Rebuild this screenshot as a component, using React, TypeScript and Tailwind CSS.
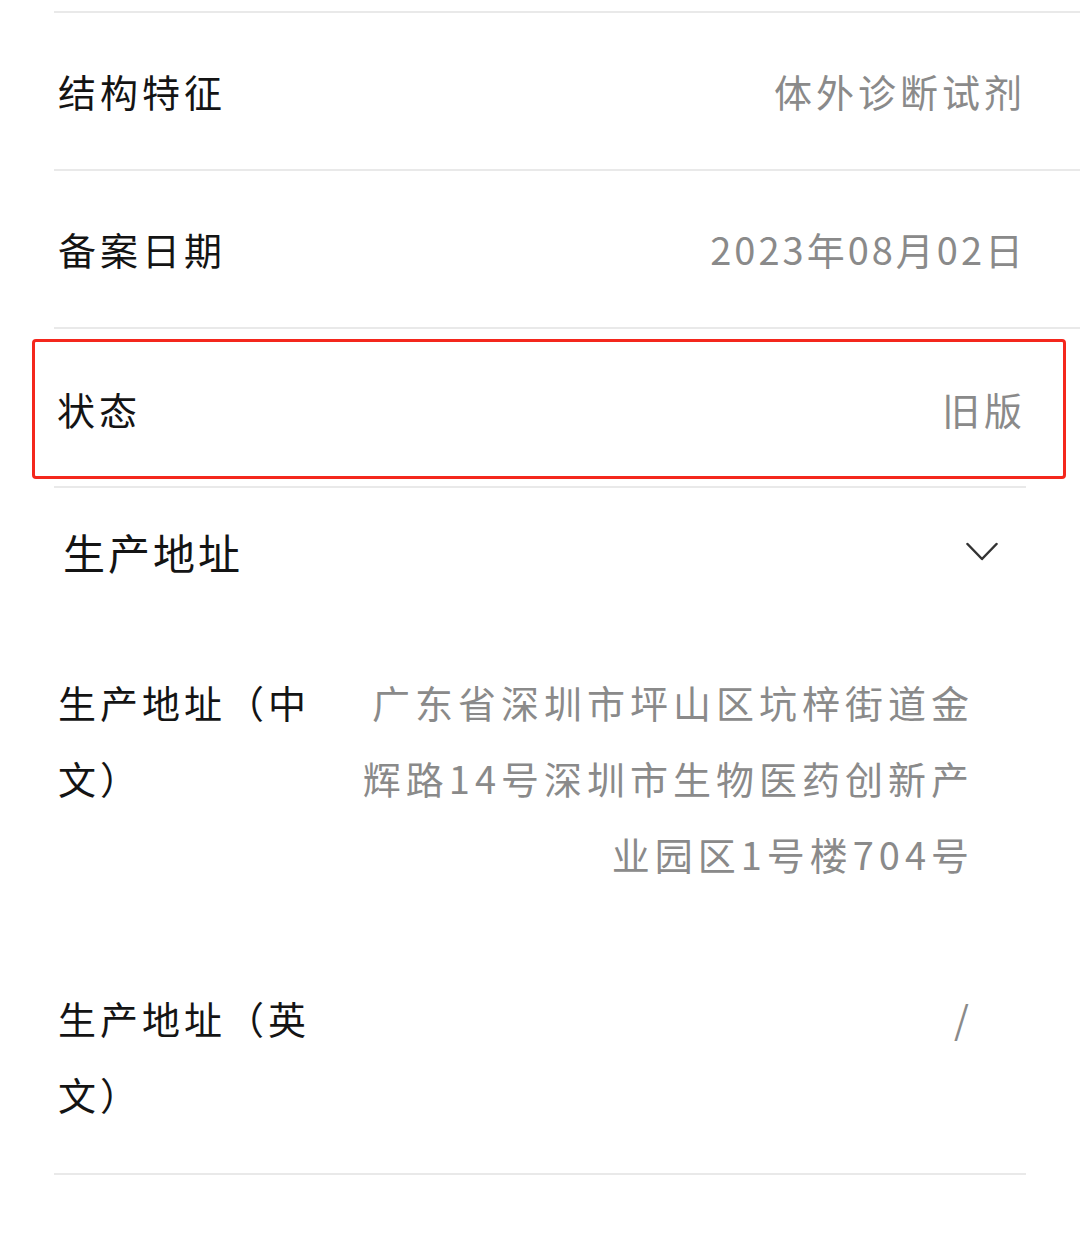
import type { ReactNode } from 'react';

const font = { fontFamily: '"Noto Sans CJK SC", "Noto Sans", sans-serif' };

const labelClass = 'text-[38px] leading-[76px] tracking-[4px] text-[#141414]';
const valueClass = 'text-[38px] leading-[76px] tracking-[4px] text-[#8a8a8a]';

function Divider({ full }: { full?: boolean }) {
  return (
    <div
      className={
        full
          ? 'ml-[54px] h-[2px] bg-[#e9e9e9]'
          : 'ml-[54px] h-[2px] w-[972px] bg-[#e9e9e9]'
      }
    />
  );
}

function InfoRow({ label, children }: { label: string; children: ReactNode }) {
  return (
    <div className="flex h-[156px] items-center justify-between pr-[54px] pl-[58px]">
      <span className={labelClass}>{label}</span>
      {children}
    </div>
  );
}

function AddressRow({
  label,
  lines,
  className,
}: {
  label: string;
  lines: string[];
  className?: string;
}) {
  return (
    <div className={`flex pl-[58px] ${className ?? ''}`}>
      <div className={`w-[270px] shrink-0 ${labelClass}`}>{label}</div>
      <div className="ml-[26px] w-[620px] text-right text-[38px] leading-[76px] tracking-[5px] text-[#8a8a8a]">
        {lines.map((line) => (
          <span key={line} className="block whitespace-nowrap">
            {line}
          </span>
        ))}
      </div>
    </div>
  );
}

export default function App() {
  return (
    <div className="h-[1236px] w-full bg-white pt-[11px]" style={font}>
      <Divider full />
      <InfoRow label="结构特征">
        <span className={valueClass}>体外诊断试剂</span>
      </InfoRow>
      <Divider full />
      <InfoRow label="备案日期">
        <span className="text-[38px] leading-[76px] tracking-[3px] text-[#8a8a8a]">
          2023年08月02日
        </span>
      </InfoRow>
      <Divider full />

      <div className="pt-[10px] pr-[14px] pb-[7px] pl-[32px]">
        <div className="flex h-[140px] items-center justify-between rounded-[4px] border-[3px] border-[#f4271d] pr-[37px] pl-[22px]">
          <span className={labelClass}>状态</span>
          <span className={valueClass}>旧版</span>
        </div>
      </div>
      <Divider />

      <div className="flex h-[128px] items-center justify-between pr-[82px] pl-[63px]">
        <span className="text-[42px] leading-[76px] tracking-[3px] text-[#141414]">
          生产地址
        </span>
        <svg width="32" height="20" viewBox="0 0 32 20" fill="none" aria-hidden>
          <polyline
            points="1.5,2 16,17 30.5,2"
            stroke="#333333"
            strokeWidth="2.5"
            strokeLinecap="round"
            strokeLinejoin="round"
          />
        </svg>
      </div>

      <AddressRow
        className="pt-[48px] pb-[44px]"
        label="生产地址（中文）"
        lines={[
          '广东省深圳市坪山区坑梓街道金',
          '辉路14号深圳市生物医药创新产',
          '业园区1号楼704号',
        ]}
      />
      <AddressRow
        className="pt-[44px] pb-[41px]"
        label="生产地址（英文）"
        lines={['/']}
      />
      <Divider />
    </div>
  );
}
